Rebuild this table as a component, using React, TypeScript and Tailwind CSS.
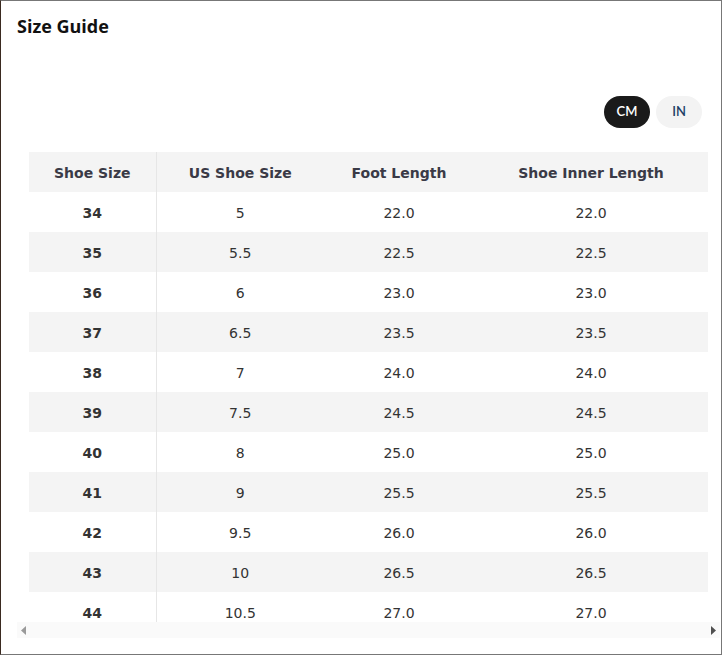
import React, { useState } from "react";

interface SizeRow {
  eu: string;
  us: string;
  foot: string;
  inner: string;
}

const rows: SizeRow[] = [
  { eu: "34", us: "5", foot: "22.0", inner: "22.0" },
  { eu: "35", us: "5.5", foot: "22.5", inner: "22.5" },
  { eu: "36", us: "6", foot: "23.0", inner: "23.0" },
  { eu: "37", us: "6.5", foot: "23.5", inner: "23.5" },
  { eu: "38", us: "7", foot: "24.0", inner: "24.0" },
  { eu: "39", us: "7.5", foot: "24.5", inner: "24.5" },
  { eu: "40", us: "8", foot: "25.0", inner: "25.0" },
  { eu: "41", us: "9", foot: "25.5", inner: "25.5" },
  { eu: "42", us: "9.5", foot: "26.0", inner: "26.0" },
  { eu: "43", us: "10", foot: "26.5", inner: "26.5" },
  { eu: "44", us: "10.5", foot: "27.0", inner: "27.0" },
];

const App: React.FC = () => {
  const [unit, setUnit] = useState<"CM" | "IN">("CM");

  return (
    <div className="w-[722px] h-[655px] bg-white border border-[#777] border-l-[#3a2a20] flex flex-col overflow-hidden">
      <div className="pl-[16px] pt-[13px] h-[95px]">
        <h2 className="text-[18px] font-bold text-[#111] leading-[24px] font-['Open_Sans',sans-serif]">
          Size Guide
        </h2>
      </div>

      <div className="flex justify-end gap-[6px] pr-[19px] h-[56px]">
        {(["CM", "IN"] as const).map((u) => (
          <button
            key={u}
            onClick={() => setUnit(u)}
            className={`w-[46px] h-[32px] rounded-full text-[13px] font-semibold font-['Lato',sans-serif] ${
              unit === u ? "bg-[#1a1a1a] text-white" : "bg-[#f3f3f3] text-[#1d3f66]"
            }`}
          >
            {u}
          </button>
        ))}
      </div>

      <div className="ml-[16px] mr-[1px] h-[486px] flex flex-col">
        <div className="h-[470px] overflow-hidden pl-[12px] pr-[11px]">
          <table className="w-[679px] border-collapse text-[14px] text-[#333] font-['DejaVu_Sans',sans-serif] table-fixed">
            <colgroup>
              <col className="w-[127px]" />
              <col className="w-[168px]" />
              <col className="w-[150px]" />
              <col className="w-[234px]" />
            </colgroup>
            <thead>
              <tr className="bg-[#f4f4f4] h-[40px]">
                <th className="pt-[2px] font-bold text-[#3a3a46] border-r border-[#e6e6e6]">Shoe Size</th>
                <th className="pt-[2px] font-bold text-[#3a3a46]">US Shoe Size</th>
                <th className="pt-[2px] font-bold text-[#3a3a46]">Foot Length</th>
                <th className="pt-[2px] font-bold text-[#3a3a46]">Shoe Inner Length</th>
              </tr>
            </thead>
            <tbody>
              {rows.map((r, idx) => (
                <tr key={r.eu} className={`h-[40px] ${idx % 2 === 1 ? "bg-[#f4f4f4]" : "bg-white"}`}>
                  <td className="pt-[2px] text-center font-bold border-r border-[#e6e6e6]">{r.eu}</td>
                  <td className="pt-[2px] text-center">{r.us}</td>
                  <td className="pt-[2px] text-center">{r.foot}</td>
                  <td className="pt-[2px] text-center">{r.inner}</td>
                </tr>
              ))}
            </tbody>
          </table>
        </div>
        <div className="h-[16px] bg-[#fafafa] flex items-center justify-between px-[4px]">
          <svg width="6" height="9" viewBox="0 0 6 9">
            <path d="M5 0 L0 4.5 L5 9 Z" fill="#9a9a9a" />
          </svg>
          <svg width="6" height="9" viewBox="0 0 6 9">
            <path d="M1 0 L6 4.5 L1 9 Z" fill="#505050" />
          </svg>
        </div>
      </div>
    </div>
  );
};

export default App;
